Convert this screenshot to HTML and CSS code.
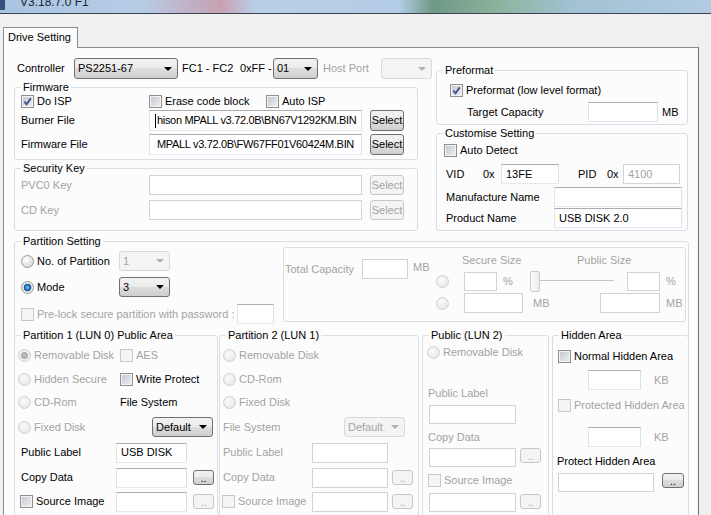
FILE: index.html
```html
<!DOCTYPE html>
<html lang="en">
<head>
  <meta charset="UTF-8">
  <title>Drive Setting</title>
  <link rel="stylesheet" href="styles.css">
</head>
<body>
  <!-- window caption, cut off by the screenshot -->
  <div class="caption">
    <span class="caption-icon"></span>
    <span class="caption-text">V3.18.7.0 F1</span>
  </div>

  <div class="tabs">
    <div class="tab">Drive Setting</div>
  </div>

  <div class="page">
    <div class="top">
      <div class="col-left">
        <div class="ctl-row">
          <span class="ctl-label">Controller</span>
          <div class="combo"><span>PS2251-67</span><i class="arrow"></i></div>
          <span class="fc">FC1 - FC2</span>
          <span>0xFF -</span>
          <div class="combo"><span>01</span><i class="arrow"></i></div>
          <span class="host off-text">Host Port</span>
          <div class="combo off"><span></span><i class="arrow"></i></div>
        </div>

        <fieldset class="group">
          <legend>Firmware</legend>
          <div class="fw-body">
            <div class="cb-row">
              <label class="opt"><span class="cb"><svg class="tick" viewBox="0 0 9 9" width="9" height="9"><path d="M1.3 4.6 L3.6 7.2 L7.8 1.4"/></svg></span>Do ISP</label>
              <label class="opt"><span class="cb"></span>Erase code block</label>
              <label class="opt"><span class="cb"></span>Auto ISP</label>
            </div>
            <div class="file-grid">
              <span>Burner File</span>
              <div class="tb path"><i class="caret"></i>hison MPALL v3.72.0B\BN67V1292KM.BIN</div>
              <button class="btn">Select</button>
              <span>Firmware File</span>
              <div class="tb path fw-path">MPALL v3.72.0B\FW67FF01V60424M.BIN</div>
              <button class="btn">Select</button>
            </div>
          </div>
        </fieldset>

        <fieldset class="group">
          <legend>Security Key</legend>
          <div class="sec-body">
            <div class="file-grid">
              <span class="off-text">PVC0 Key</span>
              <div class="tb off"></div>
              <button class="btn off">Select</button>
              <span class="off-text">CD Key</span>
              <div class="tb off"></div>
              <button class="btn off">Select</button>
            </div>
          </div>
        </fieldset>
      </div>

      <div class="col-right">
        <fieldset class="group preformat">
          <legend>Preformat</legend>
          <div class="pre-body">
            <label class="opt"><span class="cb"><svg class="tick" viewBox="0 0 9 9" width="9" height="9"><path d="M1.3 4.6 L3.6 7.2 L7.8 1.4"/></svg></span>Preformat (low level format)</label>
            <div class="cap-row">
              <span class="cap-label">Target Capacity</span>
              <div class="tb cap-input"></div>
              <span class="unit">MB</span>
            </div>
          </div>
        </fieldset>

        <fieldset class="group">
          <legend>Customise Setting</legend>
          <div class="cus-body">
            <label class="opt"><span class="cb"></span>Auto Detect</label>
            <div class="vid-row">
              <span>VID</span>
              <span>0x</span>
              <div class="tb">13FE</div>
              <span class="pid">PID</span>
              <span>0x</span>
              <div class="tb off off-text">4100</div>
            </div>
            <div class="name-grid">
              <span>Manufacture Name</span>
              <div class="tb"></div>
              <span>Product Name</span>
              <div class="tb">USB DISK 2.0</div>
            </div>
          </div>
        </fieldset>
      </div>
    </div>

    <fieldset class="group partition">
      <legend>Partition Setting</legend>
      <div class="part-body">
        <div class="part-top">
          <div class="part-left">
            <div class="pl-row">
              <label class="opt"><span class="rb"></span>No. of Partition</label>
              <div class="combo off"><span>1</span><i class="arrow"></i></div>
            </div>
            <div class="pl-row">
              <label class="opt"><span class="rb on"></span>Mode</label>
              <div class="combo"><span>3</span><i class="arrow"></i></div>
            </div>
            <div class="pl-row lock-row">
              <label class="opt off-text"><span class="cb off"></span>Pre-lock secure partition with password :</label>
              <div class="tb"></div>
            </div>
          </div>

          <div class="inner-box off-text">
            <div class="total">
              <span class="total-label">Total Capacity</span>
              <div class="tb off total-input"></div>
              <span class="total-unit">MB</span>
            </div>
            <div class="sizes">
              <div class="size-head">
                <span class="secure-title">Secure Size</span>
                <span>Public Size</span>
              </div>
              <div class="size-row">
                <span class="rb off"></span>
                <div class="tb off pct-in first"></div>
                <span class="pct">%</span>
                <div class="slider"><span class="thumb"></span><span class="track"></span></div>
                <div class="tb off pct-in pub"></div>
                <span class="unit-r">%</span>
              </div>
              <div class="size-row second">
                <span class="rb off"></span>
                <div class="tb off mb-in first"></div>
                <span class="mb">MB</span>
                <div class="tb off mb-in"></div>
                <span class="unit-r">MB</span>
              </div>
            </div>
          </div>
        </div>

        <div class="luns">
          <fieldset class="group lun p1">
            <legend>Partition 1 (LUN 0) Public Area</legend>
            <div class="opts-grid">
              <label class="opt off-text"><span class="rb off on"></span>Removable Disk</label>
              <label class="opt off-text"><span class="cb off"></span>AES</label>
              <label class="opt off-text"><span class="rb off"></span>Hidden Secure</label>
              <label class="opt"><span class="cb"></span>Write Protect</label>
              <label class="opt off-text"><span class="rb off"></span>CD-Rom</label>
              <span>File System</span>
              <label class="opt off-text"><span class="rb off"></span>Fixed Disk</label>
              <div class="combo fs-combo"><span>Default</span><i class="arrow"></i></div>
            </div>
            <div class="data-grid">
              <span>Public Label</span>
              <div class="tb">USB DISK</div>
              <span></span>
              <span>Copy Data</span>
              <div class="tb"></div>
              <button class="btn dots">..</button>
              <label class="opt"><span class="cb"></span>Source Image</label>
              <div class="tb"></div>
              <button class="btn dots off">..</button>
            </div>
          </fieldset>

          <fieldset class="group lun p2">
            <legend>Partition 2 (LUN 1)</legend>
            <div class="opts-grid off-text">
              <label class="opt wide"><span class="rb off"></span>Removable Disk</label>
              <label class="opt wide"><span class="rb off"></span>CD-Rom</label>
              <label class="opt wide"><span class="rb off"></span>Fixed Disk</label>
              <span>File System</span>
              <div class="combo off"><span>Default</span><i class="arrow"></i></div>
            </div>
            <div class="data-grid off-text">
              <span>Public Label</span>
              <div class="tb off"></div>
              <span></span>
              <span>Copy Data</span>
              <div class="tb off"></div>
              <button class="btn dots off">..</button>
              <label class="opt"><span class="cb off"></span>Source Image</label>
              <div class="tb off"></div>
              <button class="btn dots off">..</button>
            </div>
          </fieldset>

          <fieldset class="group lun p3">
            <legend>Public (LUN 2)</legend>
            <div class="stack off-text">
              <label class="opt first-opt"><span class="rb off"></span>Removable Disk</label>
              <span class="small-label pl">Public Label</span>
              <div class="tb off box87 pl-in"></div>
              <span class="small-label cd">Copy Data</span>
              <div class="in-row cd-in"><div class="tb off box87"></div><button class="btn dots off">..</button></div>
              <label class="opt src"><span class="cb off"></span>Source Image</label>
              <div class="in-row src-in"><div class="tb off box87"></div><button class="btn dots off">..</button></div>
            </div>
          </fieldset>

          <fieldset class="group lun hid">
            <legend>Hidden Area</legend>
            <div class="stack">
              <label class="opt normal"><span class="cb"></span>Normal Hidden Area</label>
              <div class="kb-row first"><div class="tb kb-in"></div><span class="kb off-text">KB</span></div>
              <label class="opt protected off-text"><span class="cb off"></span>Protected Hidden Area</label>
              <div class="kb-row second"><div class="tb kb-in"></div><span class="kb off-text">KB</span></div>
              <span class="protect-label">Protect Hidden Area</span>
              <div class="in-row protect-in"><div class="tb off box96"></div><button class="btn dots wide-dots">..</button></div>
            </div>
          </fieldset>
        </div>
      </div>
    </fieldset>
  </div>
</body>
</html>
```

FILE: styles.css
```css
/* Base */
* {
  box-sizing: border-box;
}
body {
  margin: 0;
  width: 711px;
  height: 515px;
  overflow: hidden;
  background: #f0f0f0;
  font-family: 'Liberation Sans', Arial, sans-serif;
  font-size: 11px;
  line-height: 13px;
  color: #000;
}
.off-text {
  color: #a3a3a3;
}

/* Window caption */
.caption {
  display: flex;
  height: 14px;
  overflow: hidden;
  border-bottom: 1px solid #3a4456;
  background: linear-gradient(90deg, #a9c4e0 0%, #b6cde6 20%, #c4a8bb 29%, #c9a0b2 31%, #b8cfe7 36%, #b4cde6 56%, #6e9886 61%, #8db29c 70%, #a2c1d2 80%, #b2cbe3 100%);
}
.caption-icon {
  width: 5px;
  height: 10px;
  background: #33507f;
}
.caption-text {
  margin: -5px 0 0 15px;
  font-size: 12px;
  line-height: 14px;
  color: #1c2433;
}

/* Tabs */
.tabs {
  display: flex;
  padding: 13px 0 0 3px;
}
.tab {
  position: relative;
  z-index: 1;
  height: 21px;
  margin-bottom: -1px;
  padding: 3px 6px 0 4px;
  border: 1px solid #898c95;
  border-bottom: 0;
  background: #fcfcfc;
}
.page {
  width: 696px;
  height: 470px;
  margin-left: 3px;
  padding: 10px 0 0 10px;
  border: 1px solid #898c95;
  border-right-color: #6a6d73;
  border-bottom: 0;
  background: #fcfcfc;
}

/* Common controls */
.opt {
  display: flex;
  align-items: center;
  gap: 3px;
  white-space: nowrap;
}
.cb {
  display: inline-flex;
  align-items: center;
  justify-content: center;
  flex: none;
  width: 13px;
  height: 13px;
  border: 1px solid #8e8f8f;
  background: linear-gradient(135deg, #c3c8cf 0%, #eef0f2 100%);
  box-shadow: inset 0 0 0 1px #f4f4f4;
}
.cb.off {
  border-color: #c8c8c8;
  background: #f5f5f5;
  box-shadow: none;
}
.tick path {
  fill: none;
  stroke: #3f5693;
  stroke-width: 1.9;
}
.rb {
  flex: none;
  width: 13px;
  height: 13px;
  border-radius: 50%;
  border: 1px solid #9a9a9a;
  background: radial-gradient(circle at 40% 35%, #fff 0, #e6e6e6 55%, #cdcdcd 100%);
}
.rb.off {
  border-color: #d0d0d0;
  background: radial-gradient(circle at 40% 35%, #fbfbfb 0, #ececec 60%, #e0e0e0 100%);
}
.rb.on {
  background: radial-gradient(circle, #7cc5f3 0, #2577c0 2.4px, #11498a 3.4px, #ececec 4.2px, #d6d6d6 100%);
}
.rb.off.on {
  background: radial-gradient(circle, #c4c4c4 0, #a9a9a9 3px, #f2f2f2 4px, #e2e2e2 100%);
}
.tb {
  display: flex;
  align-items: center;
  height: 20px;
  padding: 0 4px;
  overflow: hidden;
  white-space: nowrap;
  background: #fff;
  border: 1px solid;
  border-color: #abadb3 #dbdfe6 #e3e9ef #e2e3ea;
}
.tb.off {
  border-color: #d3d3d3;
}
.path {
  padding-left: 5px;
  letter-spacing: -0.32px;
}
.fw-path {
  padding-left: 7px;
}
.caret {
  width: 1px;
  height: 14px;
  margin-right: 1px;
  background: #000;
}
.btn {
  height: 100%;
  padding: 0;
  font: inherit;
  color: #000;
  border: 1px solid #707070;
  border-radius: 3px;
  background: linear-gradient(#f2f2f2 0%, #ebebeb 49%, #dddddd 50%, #cfcfcf 100%);
}
.btn.off {
  color: #a3a3a3;
  border-color: #c4c7c9;
  background: #f4f4f4;
}
.dots {
  width: 21px;
  height: 15px;
  padding-top: 2px;
  line-height: 11px;
}
.combo {
  display: flex;
  align-items: center;
  height: 20px;
  padding-left: 3px;
  border: 1px solid #707070;
  border-radius: 3px;
  background: linear-gradient(#f2f2f2 0%, #ebebeb 49%, #dddddd 50%, #cfcfcf 100%);
}
.combo span {
  flex: 1;
}
.arrow {
  width: 0;
  height: 0;
  margin-right: 5px;
  border-left: 4px solid transparent;
  border-right: 4px solid transparent;
  border-top: 4px solid #000;
}
.combo.off {
  color: #a3a3a3;
  border-color: #d9d9d9;
  background: #f4f4f4;
}
.combo.off .arrow {
  border-top-color: #b0b0b0;
}

/* Group boxes */
.group {
  margin: 0;
  padding: 0;
  min-width: 0;
  border: 1px solid #d5dfe5;
  border-radius: 3px;
}
.group legend {
  margin-left: 6px;
  padding: 0 2px;
  line-height: 13px;
}

/* Top area */
.top {
  display: flex;
  gap: 4px;
  height: 174px;
}
.col-left {
  width: 418px;
}
.col-right {
  width: 252px;
}
.ctl-row {
  display: grid;
  grid-template-columns: 60px 104px 62px 33px 45px 63px 51px;
  align-items: center;
  height: 21px;
}
.ctl-row .combo {
  height: 21px;
}
.ctl-label {
  padding-left: 3px;
}
.fc {
  padding-left: 4px;
}
.host {
  padding-left: 5px;
}
.col-left .group {
  width: 404px;
  margin-top: 2px;
}
.fw-body {
  padding: 0 0 4px 6px;
}
.cb-row {
  display: grid;
  grid-template-columns: 128px 117px auto;
  align-items: center;
  height: 15px;
}
.file-grid {
  display: grid;
  grid-template-columns: 128px 221px 34px;
  grid-auto-rows: 21px;
  row-gap: 3px;
  align-items: center;
  margin-top: 1px;
}
.file-grid .tb {
  width: 213px;
  height: 100%;
}
.sec-body {
  padding: 0 0 10px 6px;
}
.sec-body .file-grid {
  grid-auto-rows: 20px;
  row-gap: 5px;
  margin-top: 0;
}

.col-right .group {
  margin-top: 2px;
}
.col-right .preformat {
  margin-top: 6px;
}
.pre-body {
  padding: 6px 0 2px 6px;
}
.pre-body > .opt {
  height: 14px;
  margin-left: 7px;
}
.cap-row {
  display: flex;
  align-items: center;
  height: 20px;
  margin-top: 5px;
}
.cap-label {
  width: 121px;
  margin-left: 24px;
}
.cap-input {
  width: 70px;
}
.unit {
  margin-left: 4px;
}
.cus-body {
  padding: 3px 0 2px 6px;
}
.cus-body > .opt {
  height: 14px;
  margin-left: 1px;
}
.vid-row {
  display: grid;
  grid-template-columns: 37px 18px 58px 48px 16px 57px;
  align-items: center;
  height: 20px;
  margin: 7px 0 0 3px;
}
.pid {
  padding-left: 19px;
}
.name-grid {
  display: grid;
  grid-template-columns: 108px 128px;
  grid-template-rows: 20px 20px;
  row-gap: 1px;
  align-items: center;
  margin: 3px 0 0 3px;
}

/* Partition setting */
.partition {
  width: 675px;
  margin-top: 3px;
}
.part-body {
  padding: 0 2px 0 6px;
}
.part-top {
  display: flex;
  height: 76px;
}
.part-left {
  width: 262px;
}
.pl-row {
  display: grid;
  grid-template-columns: 98px 51px;
  align-items: center;
  height: 20px;
  margin-top: 6px;
}
.pl-row:first-child {
  margin-top: 3px;
}
.pl-row.lock-row {
  grid-template-columns: 216px 37px;
  margin-top: 7px;
}
.inner-box {
  display: flex;
  width: 403px;
  height: 75px;
  margin-top: -1px;
  border: 1px solid #dedede;
  border-radius: 3px;
}
.total {
  display: flex;
  align-items: center;
  height: 20px;
  margin: 11px 0 0 1px;
}
.total-label {
  width: 77px;
}
.total-input {
  width: 46px;
}
.total-unit {
  width: 28px;
  padding-left: 5px;
  align-self: flex-start;
  margin-top: 2px;
}
.sizes {
  padding-top: 6px;
}
.size-head {
  display: flex;
  height: 13px;
  padding-left: 26px;
}
.secure-title {
  width: 115px;
}
.size-row {
  display: flex;
  align-items: center;
  height: 20px;
  margin-top: 4px;
}
.size-row.second {
  margin-top: 2px;
}
.size-row .first {
  margin-left: 15px;
}
.pct-in {
  width: 33px;
  height: 19px;
}
.pct {
  width: 33px;
  padding-left: 6px;
}
.pub {
  margin-left: 13px;
}
.unit-r {
  padding-left: 6px;
}
.mb-in {
  width: 60px;
}
.size-row .mb-in.first {
  width: 59px;
}
.mb {
  width: 77px;
  padding-left: 10px;
}
.slider {
  display: flex;
  align-items: center;
  width: 84px;
  height: 21px;
}
.thumb {
  width: 10px;
  height: 21px;
  border: 1px solid #c9c9c9;
  border-radius: 2px;
  background: linear-gradient(90deg, #fafafa, #ededed);
}
.track {
  flex: 1;
  height: 2px;
  border-top: 1px solid #c4c4c4;
  border-bottom: 1px solid #fff;
}

/* LUN groups */
.luns {
  display: flex;
  margin: 5px -3px 0 -7px;
}
.lun {
  flex: none;
  height: 200px;
}
.p1 {
  width: 204px;
  margin-right: 1px;
}
.p2 {
  width: 200px;
  margin-right: 3px;
}
.p3 {
  width: 127px;
  margin-right: 3px;
}
.hid {
  width: 137px;
}
.opts-grid {
  display: grid;
  grid-template-rows: 24px 24px 23px 26px;
  align-items: center;
  padding: 1px 0 0 3px;
}
.p1 .opts-grid {
  grid-template-columns: 102px 93px;
}
.p2 .opts-grid {
  grid-template-columns: 121px 61px;
}
.opts-grid .wide {
  grid-column: 1 / 3;
}
.fs-combo {
  justify-self: end;
  width: 61px;
}
.data-grid {
  display: grid;
  grid-template-rows: 25px 25px 23px;
  align-items: center;
}
.p1 .data-grid {
  grid-template-columns: 95px 77px 21px;
  margin-left: 6px;
}
.p2 .data-grid {
  grid-template-columns: 89px 80px 21px;
  margin-left: 3px;
}
.p1 .data-grid .tb {
  width: 71px;
}
.p2 .data-grid .tb {
  width: 76px;
}
.data-grid .opt {
  margin-left: -1px;
}
.stack {
  display: flex;
  flex-direction: column;
  align-items: flex-start;
  padding-left: 4px;
}
.first-opt {
  height: 20px;
}
.small-label {
  margin-left: 1px;
}
.small-label.pl {
  margin-top: 25px;
}
.small-label.cd {
  margin-top: 7px;
}
.box87 {
  width: 87px;
  height: 19px;
}
.pl-in {
  margin: 5px 0 0 2px;
}
.in-row {
  display: flex;
  align-items: flex-start;
  margin-left: 2px;
}
.in-row .dots {
  margin-left: 4px;
}
.cd-in {
  margin-top: 4px;
}
.src {
  height: 13px;
  margin: 7px 0 0 1px;
}
.src-in {
  margin-top: 6px;
}
.src-in .dots {
  margin-top: 1px;
}
.hid .stack {
  padding-left: 5px;
}
.normal {
  height: 14px;
  margin-top: 7px;
}
.kb-row {
  display: flex;
  align-items: center;
  height: 20px;
  margin-left: 30px;
}
.kb-row.first {
  margin-top: 7px;
}
.kb-row.second {
  margin-top: 15px;
}
.kb-in {
  width: 53px;
}
.kb {
  margin-left: 13px;
}
.protected {
  height: 14px;
  margin-top: 8px;
}
.protect-label {
  margin: 8px 0 0 -1px;
}
.protect-in {
  margin: 5px 0 0 0;
}
.box96 {
  width: 96px;
  height: 19px;
}
.protect-in .wide-dots {
  width: 22px;
  margin-left: 8px;
}
```
